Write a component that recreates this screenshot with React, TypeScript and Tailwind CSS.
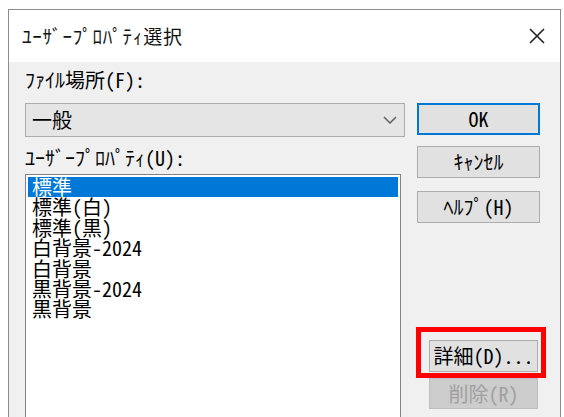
import React from 'react';

const font = '"Noto Sans Mono CJK JP", "Noto Sans CJK JP", sans-serif';

const items = ['標準', '標準(白)', '標準(黒)', '白背景-2024', '白背景', '黒背景-2024', '黒背景'];

const btn =
  'w-full h-[32px] flex items-center justify-center border bg-[#e1e1e1] text-[20px] leading-none text-black';

export default function App() {
  const selected = 0;

  return (
    <div className="w-[564px] h-[417px] overflow-hidden bg-white pl-[8px] pt-[9px]" style={{ fontFamily: font }}>
      <div className="w-[553px] h-[420px] border border-[#8c8c8c] flex flex-col">
        {/* title bar */}
        <div className="h-[52px] bg-white flex items-center justify-between pl-[13px] pr-[15px]">
          <span className="text-[19px] tracking-[0.8px] text-[#111]">ﾕｰｻﾞｰﾌﾟﾛﾊﾟﾃｨ選択</span>
          <svg width="16" height="16" viewBox="0 0 16 16" className="text-[#222]">
            <path d="M1 1 L15 15 M15 1 L1 15" stroke="currentColor" strokeWidth="1.6" fill="none" />
          </svg>
        </div>

        {/* body */}
        <div className="flex-1 bg-[#f0f0f0] flex flex-row pl-[16px]">
          <div className="w-[380px] flex flex-col">
            <div className="mt-[8px] h-[20px] text-[20px] leading-[20px] font-medium text-black">ﾌｧｲﾙ場所(F):</div>
            <div className="mt-[13px] h-[34px] border border-[#adadad] bg-[#e5e5e5] flex items-center justify-between pl-[6px] pr-[7px]">
              <span className="text-[20px] leading-none font-medium text-black">一般</span>
              <svg width="14" height="8" viewBox="0 0 14 8">
                <path d="M1 1 L7 7 L13 1" stroke="#606060" strokeWidth="1.5" fill="none" />
              </svg>
            </div>
            <div className="mt-[11px] h-[20px] text-[20px] leading-[20px] font-medium text-black">ﾕｰｻﾞｰﾌﾟﾛﾊﾟﾃｨ(U):</div>
            <div className="mt-[6px] w-[376px] flex-1 border border-[#828282] bg-white pt-[2px] pl-[2px] pr-[2px]">
              {items.map((item, i) => (
                <div
                  key={i}
                  className={`h-[20.4px] pl-[4px] text-[20px] leading-[20.4px] font-medium whitespace-nowrap ${
                    i === selected ? 'bg-[#0078d7] text-white' : 'text-black'
                  }`}
                >
                  {item}
                </div>
              ))}
            </div>
          </div>

          <div className="w-[123px] ml-[12px] flex flex-col">
            <button className={`${btn} mt-[41px] border-2 border-[#0078d7]`}>OK</button>
            <button className={`${btn} mt-[11px] border-[#adadad]`}>ｷｬﾝｾﾙ</button>
            <button className={`${btn} mt-[13px] border-[#adadad]`}>ﾍﾙﾌﾟ(H)</button>
            <div className="relative mt-[117px] ml-[12px] w-[109px]">
              <button className={`${btn} h-[31px] border-[#adadad]`}>詳細(D)...</button>
              <div className="absolute -left-[13px] -top-[13px] -right-[8px] -bottom-[6px] border-[5px] border-[#ff0000]" />
            </div>
            <button className="mt-[6px] ml-[12px] w-[109px] h-[31px] flex items-center justify-center border border-[#bfbfbf] bg-[#cccccc] text-[20px] leading-none text-[#a0a0a0]">
              削除(R)
            </button>
          </div>
        </div>
      </div>
    </div>
  );
}
